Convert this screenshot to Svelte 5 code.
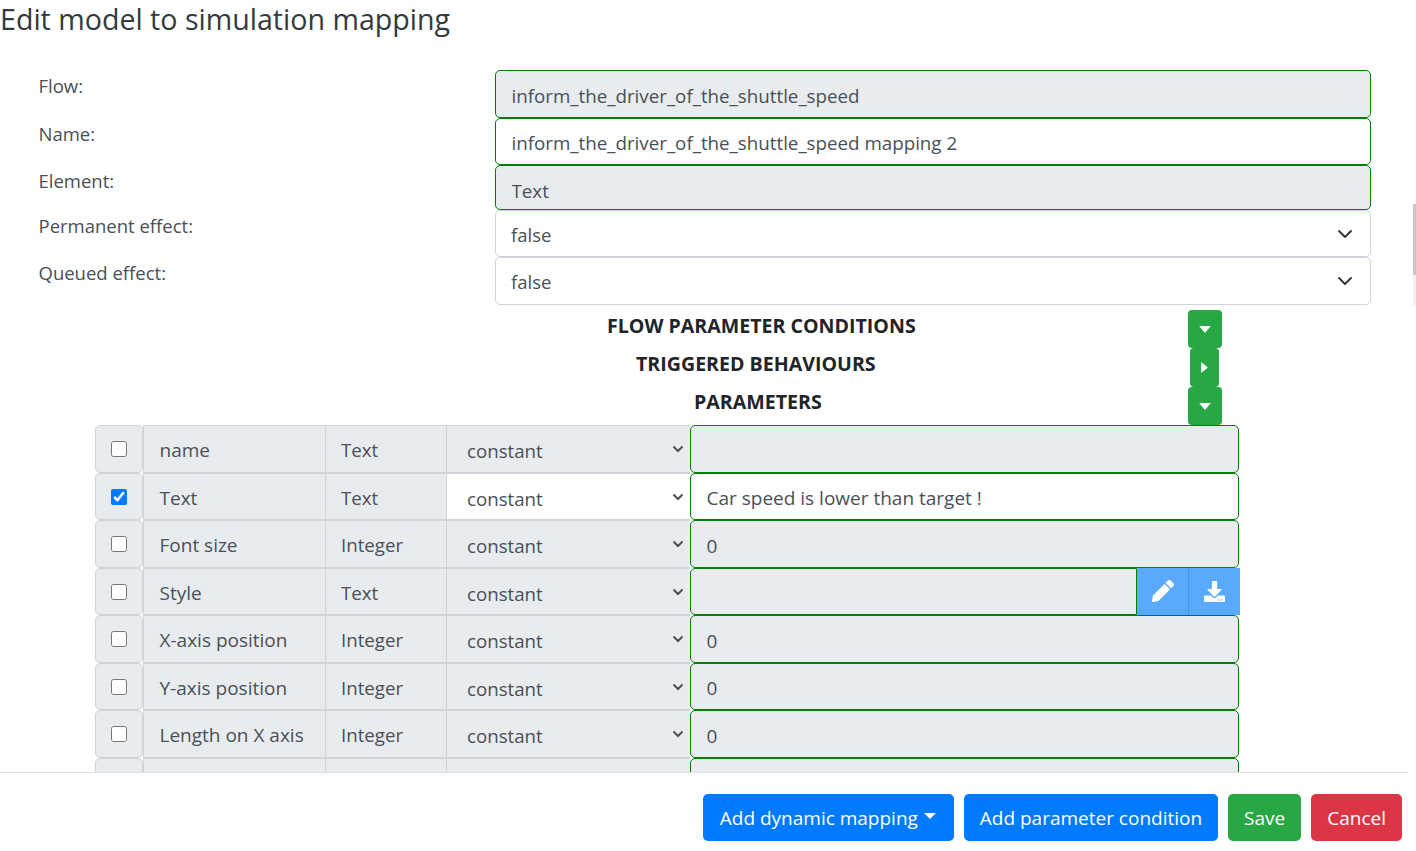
<script>
  const topRows = [
    { label: 'Flow:', value: 'inform_the_driver_of_the_shuttle_speed', kind: 'off', h: 'h1', pad: 'p1' },
    { label: 'Name:', value: 'inform_the_driver_of_the_shuttle_speed mapping 2', kind: 'on', h: 'h2', pad: 'p1' },
    { label: 'Element:', value: 'Text', kind: 'off', h: 'h3', pad: 'p2' },
    { label: 'Permanent effect:', value: 'false', kind: 'sel', h: 'h2', pad: '' },
    { label: 'Queued effect:', value: 'false', kind: 'sel', h: 'h1', pad: '' }
  ];
  const sections = [
    { title: 'FLOW PARAMETER CONDITIONS', cls: 's1', open: true },
    { title: 'TRIGGERED BEHAVIOURS', cls: 's2', open: false },
    { title: 'PARAMETERS', cls: 's3', open: true }
  ];
  const params = [
    { name: 'name', type: 'Text', value: '', checked: false },
    { name: 'Text', type: 'Text', value: 'Car speed is lower than target !', checked: true },
    { name: 'Font size', type: 'Integer', value: '0', checked: false },
    { name: 'Style', type: 'Text', value: '', checked: false, tools: true },
    { name: 'X-axis position', type: 'Integer', value: '0', checked: false },
    { name: 'Y-axis position', type: 'Integer', value: '0', checked: false },
    { name: 'Length on X axis', type: 'Integer', value: '0', checked: false },
    { name: 'Length on Y axis', type: 'Integer', value: '0', checked: false }
  ];
</script>

<div class="page">
  <main class="body">
    <h1>Edit model to simulation mapping</h1>

    <section class="form">
      {#each topRows as r}
        <div class="frow {r.h}">
          <div class="flabel">{r.label}</div>
          {#if r.kind === 'sel'}
            <div class="fselect">
              <select><option>{r.value}</option></select>
              <svg class="chev" viewBox="0 0 16 16" aria-hidden="true"><path d="M2 5l6 6 6-6" fill="none" stroke="#343a40" stroke-width="2" stroke-linecap="round" stroke-linejoin="round"/></svg>
            </div>
          {:else}
            <input class="finput {r.pad}" class:off={r.kind === 'off'} value={r.value} readonly />
          {/if}
        </div>
      {/each}
    </section>

    <section class="sections">
      {#each sections as s}
        <div class="srow {s.cls}">
          <span class="stitle">{s.title}</span>
          <button class="toggle">
            {#if s.open}
              <svg viewBox="0 0 10 6" width="12" height="7" aria-hidden="true"><path d="M0 0h10L5 6z" fill="#fff"/></svg>
            {:else}
              <svg viewBox="0 0 6 10" width="7" height="11" aria-hidden="true"><path d="M0 0v10l6-5z" fill="#fff"/></svg>
            {/if}
          </button>
        </div>
      {/each}
    </section>

    <section class="table">
      {#each params as p}
        <div class="check"><input type="checkbox" checked={p.checked} /></div>
        <div class="cell name">{p.name}</div>
        <div class="cell type">{p.type}</div>
        <div class="cell mode" class:white={p.checked}>
          <span>constant</span>
          <svg class="mini" viewBox="0 0 12 8" aria-hidden="true"><path d="M1.5 1.5L6 6l4.500-4.500" fill="none" stroke="#495057" stroke-width="2"/></svg>
        </div>
        <div class="valwrap">
          <input class="val" class:white={p.checked} class:joined={p.tools} value={p.value} readonly />
          {#if p.tools}
            <button class="tool" aria-label="edit">
              <svg viewBox="0 0 512 512" width="22" height="22" aria-hidden="true"><path fill="#fff" d="M497.900 142.100l-46.100 46.100c-4.700 4.700-12.300 4.700-17 0l-111-111c-4.700-4.700-4.700-12.300 0-17l46.100-46.100c18.700-18.700 49.100-18.700 67.900 0l60.100 60.100c18.800 18.700 18.800 49.100 0 67.900zM284.200 99.800L21.600 362.400.4 483.900c-2.900 16.400 11.400 30.600 27.800 27.800l121.500-21.300 262.600-262.600c4.700-4.700 4.700-12.300 0-17l-111-111c-4.800-4.700-12.400-4.700-17.100 0z"/></svg>
            </button>
            <button class="tool last" aria-label="download">
              <svg viewBox="0 0 512 512" width="21" height="21" aria-hidden="true"><path fill="#fff" d="M216 0h80c13.300 0 24 10.700 24 24v168h87.700c17.800 0 26.700 21.500 14.100 34.100L269.700 378.300c-7.500 7.500-19.800 7.500-27.300 0L90.100 226.100c-12.600-12.600-3.700-34.100 14.100-34.100H192V24c0-13.300 10.700-24 24-24zm296 376v112c0 13.300-10.700 24-24 24H24c-13.300 0-24-10.700-24-24V376c0-13.300 10.700-24 24-24h146.700l49 49c20.100 20.100 52.500 20.100 72.600 0l49-49H488c13.300 0 24 10.700 24 24zm-124 88c0-11-9-20-20-20s-20 9-20 20 9 20 20 20 20-9 20-20zm64 0c0-11-9-20-20-20s-20 9-20 20 9 20 20 20 20-9 20-20z"/></svg>
            </button>
          {/if}
        </div>
      {/each}
    </section>
  </main>

  <footer>
    <button class="btn blue wide">Add dynamic mapping<i class="caret"></i></button>
    <button class="btn blue">Add parameter condition</button>
    <button class="btn green">Save</button>
    <button class="btn red">Cancel</button>
  </footer>

  <div class="scrolltrack"><div class="scrollthumb"></div></div>
</div>

<style>
  :global(body) {
    margin: 0;
    background: #fff;
    font-family: "Open Sans", "Noto Sans", sans-serif;
    color: #212529;
  }
  .page {
    width: 1416px;
    height: 851px;
    position: relative;
    overflow: hidden;
    font-size: 18.5px;
  }
  .body {
    height: 772px;
    width: 1408px;
    overflow: hidden;
  }
  h1 {
    margin: 0;
    height: 70px;
    box-sizing: border-box;
    font-size: 28.6px;
    line-height: 37px;
    font-weight: 400;
    color: #343a40;
  }
  .form {
    display: flex;
    flex-direction: column;
    width: 1371px;
  }
  .frow {
    display: flex;
    justify-content: space-between;
  }
  .h1 { height: 48px; }
  .h2 { height: 47px; }
  .h3 { height: 45px; }
  .flabel {
    padding: 3px 0 0 38.5px;
    line-height: 26px;
    color: #495057;
  }
  .finput, .fselect select, .val {
    font: inherit;
    box-sizing: border-box;
    color: #495057;
    outline: none;
    margin: 0;
  }
  .finput {
    font-size: 18.75px;
    width: 876px;
    height: 100%;
    border: 1px solid green;
    border-radius: 5px;
    padding: 2px 15.5px 0;
    background: #fff;
  }
  .finput.p2 { padding-top: 6px; }
  .finput.off, .val { background: #e9ecef; }
  .fselect {
    width: 876px;
    position: relative;
  }
  .fselect select {
    appearance: none;
    width: 100%;
    height: 100%;
    background: #fff;
    border: 1px solid #ced4da;
    border-radius: 5px;
    padding: 1px 15px 0;
  }
  .chev {
    position: absolute;
    right: 18px;
    top: 16px;
    width: 16px;
    height: 16px;
    pointer-events: none;
  }
  .sections { margin-top: 5px; }
  .srow {
    display: flex;
    align-items: center;
    font-weight: 700;
    height: 38px;
  }
  .s2 { height: 39px; }
  .stitle {
    font-size: 19.6px;
    line-height: 28px;
    padding-bottom: 6px;
    white-space: nowrap;
    flex: none;
  }
  .s2 .stitle { padding-bottom: 8px; }
  .s3 .stitle { padding-bottom: 8px; }
  .s1 .stitle { width: 308px; margin-left: 607px; margin-right: 273px; }
  .s2 .stitle { width: 240px; margin-left: 636px; margin-right: 314px; }
  .s3 .stitle { width: 129px; margin-left: 694px; margin-right: 365px; }
  .toggle {
    height: 100%;
    width: 34px;
    padding: 0;
    border: 0;
    border-radius: 4px;
    background: #28a745;
    display: flex;
    align-items: center;
    justify-content: center;
  }
  .s2 .toggle { width: 29px; }
  .table {
    margin-left: 95px;
    width: 1145px;
    display: grid;
    grid-template-columns: 48px 183px 121px 243px 551px;
    grid-auto-rows: 47.5px;
  }
  .check {
    box-sizing: border-box;
    background: #e9ecef;
    border: 1px solid #ced4da;
    border-radius: 5px;
    display: flex;
    align-items: center;
    justify-content: center;
    padding-top: 1px;
  }
  .check input {
    width: 16px;
    height: 16px;
    margin: 0;
    accent-color: #007bff;
  }
  .cell {
    box-sizing: border-box;
    background: #e9ecef;
    border: 1px solid #ced4da;
    display: flex;
    align-items: center;
    color: #495057;
    padding: 2px 0 0 15px;
    white-space: nowrap;
  }
  .name { padding-left: 15.5px; padding-top: 2.5px; font-size: 19px; }
  .type { border-left: 0; font-size: 18.7px; }
  .mode {
    border-left: 0;
    border-right: 0;
    padding-left: 20px;
    padding-top: 3.5px;
    position: relative;
    font-size: 18.7px;
  }
  .white { background: #fff; }
  .mini {
    position: absolute;
    right: 6px;
    top: 19px;
    width: 12px;
    height: 8px;
  }
  .valwrap {
    display: flex;
    min-width: 0;
    margin-right: 2px;
  }
  .val {
    flex: 1;
    min-width: 0;
    height: 100%;
    border: 1px solid green;
    border-radius: 5px;
    padding: 4px 15.5px 0;
    font-size: 19px;
  }
  .val.white { background: #fff; }
  .val.joined { border-radius: 5px 0 0 5px; }
  .tool {
    flex: none;
    width: 52px;
    height: 100%;
    padding: 0;
    border: 0;
    border-right: 1px solid #3d95f5;
    background: #59a9ff;
    display: flex;
    align-items: center;
    justify-content: center;
  }
  .tool.last { border-right: 0; width: 51px; margin-right: -1px; }
  footer {
    box-sizing: border-box;
    width: 1408px;
    height: 79px;
    border-top: 1px solid #dee2e6;
    display: flex;
    justify-content: flex-end;
    align-items: flex-start;
    gap: 10px;
    padding: 21px 6px 0 0;
    font-size: 19px;
  }
  .btn {
    height: 47px;
    font: inherit;
    color: #fff;
    border: 0;
    border-radius: 5px;
    padding: 0 16px;
    white-space: nowrap;
    display: flex;
    align-items: center;
  }
  .btn.wide { padding: 0 17px 0 17px; width: 251px; }
  .blue { background: #007bff; }
  .green { background: #28a745; }
  .red { background: #dc3545; }
  .caret {
    margin-left: 6px;
    margin-bottom: 4px;
    border-top: 6px solid #fff;
    border-left: 6px solid transparent;
    border-right: 6px solid transparent;
  }
  .scrolltrack {
    position: absolute;
    right: 0;
    top: 204px;
    width: 3px;
    height: 101px;
    background: #f1f1f1;
  }
  .scrollthumb {
    height: 71px;
    background: #c8c8c8;
  }
</style>
